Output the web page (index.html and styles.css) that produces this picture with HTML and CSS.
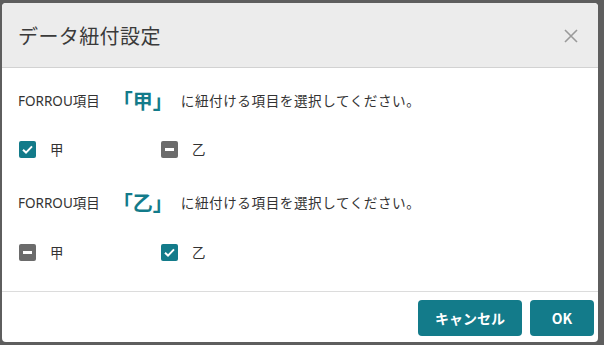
FILE: index.html
```html
<!DOCTYPE html>
<html lang="ja">
<head>
<meta charset="utf-8">
<link rel="stylesheet" href="styles.css">
</head>
<body>
<div class="dialog">
  <div class="header">
    <div class="title">データ紐付設定</div>
    <button class="close" aria-label="close">
      <svg width="14" height="14" viewBox="0 0 14 14"><path d="M1 1L13 13M13 1L1 13" stroke="#9a9a9a" stroke-width="1.6" fill="none"/></svg>
    </button>
  </div>
  <div class="body">
    <div class="question q1">
      <span class="label">FORROU項目</span>
      <span class="key">「甲」</span>
      <span class="desc">に紐付ける項目を選択してください。</span>
    </div>
    <div class="options o1">
      <div class="option"><span class="cb checked"><svg width="17" height="17" viewBox="0 0 17 17"><path d="M4 8.8L7 11.6L13 5.4" stroke="#fff" stroke-width="2" fill="none"/></svg></span><span class="opt-text">甲</span></div>
      <div class="option"><span class="cb indet"><span class="bar"></span></span><span class="opt-text">乙</span></div>
    </div>
    <div class="question q2">
      <span class="label">FORROU項目</span>
      <span class="key">「乙」</span>
      <span class="desc">に紐付ける項目を選択してください。</span>
    </div>
    <div class="options o2">
      <div class="option"><span class="cb indet"><span class="bar"></span></span><span class="opt-text">甲</span></div>
      <div class="option"><span class="cb checked"><svg width="17" height="17" viewBox="0 0 17 17"><path d="M4 8.8L7 11.6L13 5.4" stroke="#fff" stroke-width="2" fill="none"/></svg></span><span class="opt-text">乙</span></div>
    </div>
  </div>
  <div class="footer">
    <button class="btn">キャンセル</button>
    <button class="btn ok">OK</button>
  </div>
</div>
</body>
</html>
```
FILE: styles.css
```css
html, body {
  margin: 0;
  padding: 0;
}
body {
  background: #5e5e5e;
  width: 604px;
  height: 345px;
  overflow: hidden;
  font-family: "Noto Sans", "Noto Sans CJK JP", sans-serif;
  color: #333;
}
.dialog {
  margin: 3px 0 0 2px;
  width: 596px;
  height: 339px;
  background: #fff;
  border-radius: 4px;
  overflow: hidden;
  display: flex;
  flex-direction: column;
}
.header {
  height: 64px;
  background: #ececec;
  border-bottom: 1px solid #d2d2d2;
  display: flex;
  align-items: center;
  justify-content: space-between;
  padding: 0 20px 0 16px;
  flex-shrink: 0;
}
.title {
  font-size: 20px;
  color: #3a3a3a;
  font-family: "Noto Sans CJK JP", sans-serif;
  letter-spacing: 0.4px;
}
.close {
  background: none;
  border: none;
  padding: 0;
  width: 14px;
  height: 14px;
  display: flex;
  margin-top: 2px;
}
.body {
  flex: 1;
  padding: 19px 16px 0 16px;
  display: flex;
  flex-direction: column;
}
.question {
  display: flex;
  align-items: center;
  height: 26px;
  font-size: 13.6px;
}
.label {
  font-family: "Noto Sans", "Noto Sans CJK JP", sans-serif;
  font-size: 13.5px;
}
.key {
  font-family: "Noto Sans CJK JP", sans-serif;
  font-weight: bold;
  font-size: 20px;
  color: #137b8a;
  margin: 0 8px 0 13px;
}
.desc {
  font-family: "Noto Sans CJK JP", sans-serif;
  letter-spacing: 0.55px;
}
.options {
  display: flex;
  height: 26px;
  align-items: center;
  padding-left: 1px;
}
.o1 { margin-top: 23px; }
.q2 { margin-top: 27px; }
.o2 { margin-top: 24px; }
.option {
  width: 142px;
  display: flex;
  align-items: center;
}
.cb {
  width: 17px;
  height: 17px;
  border-radius: 2px;
  display: flex;
  align-items: center;
  justify-content: center;
  flex-shrink: 0;
}
.cb.checked { background: #137b8a; }
.cb.indet { background: #6b6b6b; }
.bar {
  width: 9px;
  height: 3px;
  background: #fff;
}
.opt-text {
  margin-left: 14px;
  font-size: 13.5px;
  font-family: "Noto Sans CJK JP", sans-serif;
}
.footer {
  height: 51px;
  border-top: 1px solid #dcdcdc;
  display: flex;
  justify-content: flex-end;
  align-items: flex-start;
  padding: 8px 4px 0 0;
  gap: 8px;
  flex-shrink: 0;
  box-sizing: border-box;
}
.btn {
  height: 36px;
  padding: 0;
  width: 104px;
  background: #137b8a;
  color: #fff;
  border: none;
  border-radius: 4px;
  font-weight: bold;
  font-size: 14px;
  font-family: "Noto Sans CJK JP", sans-serif;
}
.btn.ok {
  width: 64px;
}
```
